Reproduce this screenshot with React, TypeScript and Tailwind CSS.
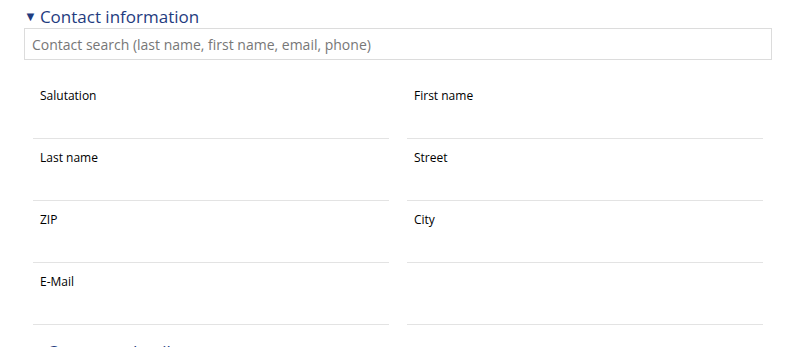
const fields = ["Salutation", "First name", "Last name", "Street", "ZIP", "City", "E-Mail", ""];

function Field({ label }: { label: string }) {
  return (
    <div className="h-[62px] border-b border-[#e3e3e3] px-[7px] pt-[5px]">
      <span className="text-[12px] leading-4 text-black">{label}</span>
    </div>
  );
}

export default function App() {
  return (
    <div
      className="h-[347px] w-[796px] overflow-hidden bg-white"
      style={{ fontFamily: '"Open Sans", "Liberation Sans", sans-serif' }}
    >
      <div className="px-6">
        <div className="flex h-[28px] items-center gap-[3px] pt-[5px] text-[#1f3c80]">
          <span className="text-[13px] leading-none">▼</span>
          <span className="text-[17px] leading-6">Contact information</span>
        </div>
        <div className="flex h-[32px] items-center border border-[#dcdcdc] px-[7px]">
          <span className="text-[14px] text-[#777777]">
            Contact search (last name, first name, email, phone)
          </span>
        </div>
        <div className="mt-[17px] grid grid-cols-2 gap-x-[18px] px-[9px]">
          {fields.map((f, i) => (
            <Field key={i} label={f} />
          ))}
        </div>
        <div className="flex items-center gap-[7px] pl-[23px] pt-[15px] text-[#1f3c80]">
          <span className="text-[17px] leading-6">Company details</span>
        </div>
      </div>
    </div>
  );
}
